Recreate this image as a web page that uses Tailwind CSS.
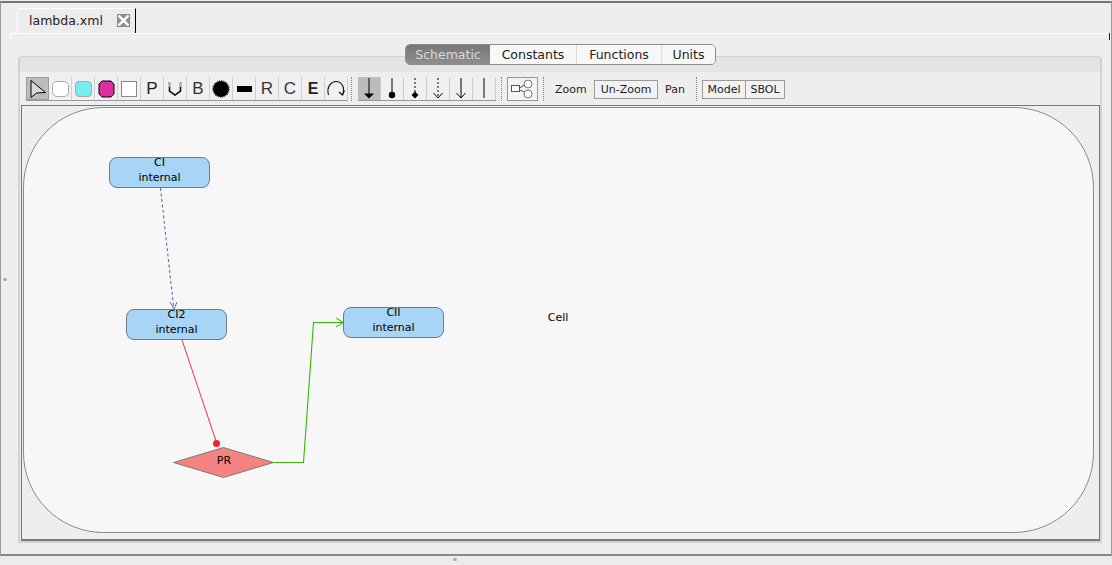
<!DOCTYPE html>
<html lang="en">
<head>
  <meta charset="UTF-8">
  <title>lambda.xml</title>
  <script src="https://cdn.jsdelivr.net/npm/@tailwindcss/browser@4"></script>
</head>
<body class="relative w-[1112px] h-[565px] overflow-hidden bg-[#ececec] font-['DejaVu_Sans',sans-serif] text-black">
  <!-- window frame -->
  <div class="mt-px h-[555px] border-t-2 border-x border-b-2 border-x-[#999] border-t-[#777] border-b-[#8a8a8a] flex flex-col bg-[#eeeeee]">

    <!-- file tab strip -->
    <div class="relative h-[31px] pl-[16px] pt-[5px] shrink-0">
      <div class="relative z-10 w-[119px] h-[25px] bg-[#ececec] border-t border-l border-t-white border-l-white rounded-tl-[4px] border-r border-r-black flex items-center pl-[11px] gap-[14px] text-[12.5px] text-[#222]">
        <span>lambda.xml</span>
        <span class="-mt-[1px] w-[13px] h-[13px] bg-[#8f8f8f] border border-[#8a8a8a] flex items-center justify-center">
          <svg width="11" height="11" viewBox="0 0 11 11"><path d="M0.5 0.5 L10.5 10.5 M10.5 0.5 L0.5 10.5" stroke="#fff" stroke-width="2.4"/></svg>
        </span>
      </div>
      <div class="absolute left-[9px] top-[30px] w-[1098px] h-px bg-white"></div>
      <div class="absolute left-[9px] top-[30px] w-px h-[7px] bg-white"></div>
      <div class="absolute left-[1108px] top-[30px] w-px h-[7px] bg-[#222]"></div>
    </div>

    <!-- panel with segmented tabs -->
    <div class="relative mt-[22px] ml-[17px] w-[1084px] h-[487px] border-x-2 border-b-2 border-t border-[#d2d2d2] rounded-t-[4px] flex flex-col bg-[#eeeeee]">
      <div class="absolute left-[385px] top-[-13px] w-[311px] h-[21px] z-10 flex rounded-[5px] border border-[#8d8d8d] text-[12.5px] text-[#222] overflow-hidden">
        <div class="w-[84px] pt-[2px] flex items-center justify-center bg-gradient-to-b from-[#777] to-[#8e8e8e] text-[#d8d8d8]">Schematic</div>
        <div class="w-[87px] pt-[2px] flex items-center justify-center bg-[#f7f7f7] border-r border-[#dcdcdc]">Constants</div>
        <div class="w-[85px] pt-[2px] flex items-center justify-center bg-[#f7f7f7] border-r border-[#dcdcdc]">Functions</div>
        <div class="flex-1 pt-[2px] flex items-center justify-center bg-[#f7f7f7]">Units</div>
      </div>
      <div class="h-[15px] bg-[#e4e4e4] shrink-0"></div>

      <!-- toolbar -->
      <div class="h-[33px] shrink-0 pl-[6px] pt-[5px] flex items-start text-[11px] text-[#222]">
        <div class="flex h-[24px] border-b border-[#999] font-['Liberation_Sans',sans-serif]">
          <div class="w-[23px] bg-[#bcbcbc] border border-[#999] flex items-center justify-center"><svg width="20" height="20" viewBox="0 0 20 20"><path d="M3 1.5 L3 18.5 L8.5 14 L17.5 13.5 Z" fill="#d8d8d8" stroke="#000" stroke-width="1"/></svg></div>
          <div class="w-[23px] bg-[#f0f0f0] border-r border-[#cfcfcf] flex items-center justify-center"><div class="w-[17px] h-[16px] rounded-[5px] bg-white border border-[#aaa]"></div></div>
          <div class="w-[23px] bg-[#f0f0f0] border-r border-[#cfcfcf] flex items-center justify-center"><div class="w-[17px] h-[16px] rounded-[4px] bg-[#74eeee] border border-[#aaa]"></div></div>
          <div class="w-[23px] bg-[#f0f0f0] border-r border-[#cfcfcf] flex items-center justify-center"><svg width="17" height="18" viewBox="0 0 17 18"><path d="M4 1 H13 L16 4 V14 L13 17 H4 L1 14 V4 Z" fill="#de2ea0" stroke="#000" stroke-width="1"/></svg></div>
          <div class="w-[23px] bg-[#f0f0f0] border-r border-[#cfcfcf] flex items-center justify-center"><div class="w-[16px] h-[16px] bg-white border border-[#888]"></div></div>
          <div class="w-[23px] bg-[#f0f0f0] border-r border-[#cfcfcf] flex items-center justify-center text-[17px]">P</div>
          <div class="w-[23px] bg-[#f0f0f0] border-r border-[#cfcfcf] flex items-center justify-center"><svg width="16" height="17" viewBox="0 0 16 17"><path d="M2.5 2 V11 L8 15 L13.5 11 V2" fill="none" stroke="#000" stroke-width="1.5"/><path d="M2.5 2 V7 M13.5 2 V7" stroke="#bbb" stroke-width="1.6"/></svg></div>
          <div class="w-[23px] bg-[#f0f0f0] border-r border-[#cfcfcf] flex items-center justify-center text-[17px] text-[#333]">B</div>
          <div class="w-[23px] bg-[#f0f0f0] border-r border-[#cfcfcf] flex items-center justify-center"><div class="w-[16px] h-[16px] rounded-full bg-black outline-1 outline-dotted outline-[#555]"></div></div>
          <div class="w-[23px] bg-[#f0f0f0] border-r border-[#cfcfcf] flex items-center justify-center"><div class="w-[15px] h-[6px] bg-black"></div></div>
          <div class="w-[23px] bg-[#f0f0f0] border-r border-[#cfcfcf] flex items-center justify-center text-[17px] text-[#333]">R</div>
          <div class="w-[23px] bg-[#f0f0f0] border-r border-[#cfcfcf] flex items-center justify-center text-[17px] text-[#333]">C</div>
          <div class="w-[23px] bg-[#f0f0f0] border-r border-[#cfcfcf] flex items-center justify-center text-[16px] font-bold">E</div>
          <div class="w-[23px] bg-[#f0f0f0] border-r border-[#cfcfcf] flex items-center justify-center"><svg width="20" height="18" viewBox="0 0 20 18"><path d="M2.5 15 C0 6 6 1.5 10 1.5 C15 1.5 19 6 17 14" fill="none" stroke="#111" stroke-width="1.1"/><path d="M13 12 L16.5 15 L18.5 10.5" fill="none" stroke="#111" stroke-width="1.1"/></svg></div>
        </div>
        <div class="ml-[3px] mr-[6px] h-[24px] border-l border-dotted border-[#888]"></div>
        <div class="flex h-[24px] border-b border-[#999]">
          <div class="w-[23px] bg-[#bcbcbc] border-r border-[#ccc] flex items-center justify-center"><svg width="16" height="22" viewBox="0 0 16 22"><path d="M8 0 V17" stroke="#000"/><path d="M3 15.5 H13 L8 20.5 Z" fill="#000"/></svg></div>
          <div class="w-[23px] bg-[#f0f0f0] border-r border-[#ccc] flex items-center justify-center"><svg width="16" height="22" viewBox="0 0 16 22"><path d="M8 0 V15" stroke="#000"/><circle cx="8" cy="17" r="3.2" fill="#000"/></svg></div>
          <div class="w-[23px] bg-[#f0f0f0] border-r border-[#ccc] flex items-center justify-center"><svg width="16" height="22" viewBox="0 0 16 22"><path d="M8 0 V14" stroke="#000" stroke-dasharray="2 2"/><path d="M8 13.5 L11.5 17 L8 20.5 L4.5 17 Z" fill="#000"/></svg></div>
          <div class="w-[23px] bg-[#f0f0f0] border-r border-[#ccc] flex items-center justify-center"><svg width="16" height="22" viewBox="0 0 16 22"><path d="M8 0 V19" stroke="#000" stroke-dasharray="2 2"/><path d="M3.5 15 L8 20 L12.5 15" fill="none" stroke="#000"/></svg></div>
          <div class="w-[23px] bg-[#f0f0f0] border-r border-[#ccc] flex items-center justify-center"><svg width="16" height="22" viewBox="0 0 16 22"><path d="M8 0 V19.5" stroke="#000"/><path d="M3.5 15 L8 20 L12.5 15" fill="none" stroke="#000"/></svg></div>
          <div class="w-[23px] bg-[#f0f0f0] border-r border-[#ccc] flex items-center justify-center"><svg width="16" height="22" viewBox="0 0 16 22"><path d="M8 0 V20" stroke="#000"/></svg></div>
        </div>
        <div class="ml-[5px] mr-[5px] h-[24px] border-l border-dotted border-[#888]"></div>
        <div class="w-[31px] h-[24px] bg-[#f4f4f4] border border-[#999] flex items-center justify-center">
          <svg width="25" height="20" viewBox="0 0 25 20"><rect x="1.5" y="6.5" width="8" height="6" fill="#fff" stroke="#555"/><circle cx="18" cy="5" r="4" fill="#fff" stroke="#777"/><circle cx="18" cy="15" r="4" fill="#fff" stroke="#777"/><path d="M9.5 9 L14.5 6 M9.5 11 L14.5 13" stroke="#555"/></svg>
        </div>
        <div class="ml-[5px] mr-[11px] h-[24px] border-l border-dotted border-[#888]"></div>
        <div class="h-[26px] flex items-center w-[39px]">Zoom</div>
        <div class="mt-[3px] pt-px w-[64px] h-[19px] border border-[#999] bg-[#f2f2f2] flex items-center justify-center">Un-Zoom</div>
        <div class="h-[26px] flex items-center ml-[7px] w-[31px]">Pan</div>
        <div class="mr-[5px] h-[24px] border-l border-dotted border-[#888]"></div>
        <div class="mt-[3px] flex h-[19px]">
          <div class="pt-px w-[44px] border border-[#999] bg-[#f2f2f2] flex items-center justify-center">Model</div>
          <div class="pt-px w-[39px] border border-l-0 border-[#999] bg-[#f2f2f2] flex items-center justify-center">SBOL</div>
        </div>
      </div>

      <!-- schematic canvas -->
      <div class="relative ml-[1px] w-[1079px] h-[436px] border border-[#777] border-b-2 overflow-hidden text-[11px] leading-[15px] text-center">
        <svg class="absolute left-0 top-0" width="1077" height="434" viewBox="22 106 1077 434">
          <rect x="23.5" y="107.5" width="1070" height="425" rx="80" ry="80" fill="#f7f7f7" stroke="#8a8a8a"/>
          <path d="M160.5 188 L173.5 306" fill="none" stroke="#5a5aa6" stroke-dasharray="3 2.5"/>
          <path d="M170 302 L174 309 L177 302" fill="none" stroke="#6a6ab0"/>
          <path d="M182 340 L216 441" fill="none" stroke="#ff3040"/>
          <circle cx="216.5" cy="443.5" r="3.5" fill="#f5202c"/>
          <path d="M274 462.5 H303.5 L313.5 322.5 H343" fill="none" stroke="#36b800" stroke-width="1.1"/>
          <path d="M336 318 L343.5 322.5 L336 327" fill="none" stroke="#36b800"/>
          <path d="M173.5 462.5 L223.5 447.5 L273.5 462.5 L223.5 477.5 Z" fill="#f58282" stroke="#807a7a"/>
        </svg>
        <div class="absolute left-[87px] top-[51px] w-[101px] h-[31px] rounded-[8px] bg-[#a8d5f5] border border-[#6f7b85]"><div class="-mt-[3px]">CI<br>internal</div></div>
        <div class="absolute left-[104px] top-[203px] w-[101px] h-[31px] rounded-[8px] bg-[#a8d5f5] border border-[#6f7b85]"><div class="-mt-[3px]">CI2<br>internal</div></div>
        <div class="absolute left-[321px] top-[201px] w-[101px] h-[31px] rounded-[8px] bg-[#a8d5f5] border border-[#6f7b85]"><div class="-mt-[3px]">CII<br>internal</div></div>
        <div class="absolute left-[182px] top-[347px] w-[40px]">PR</div>
        <div class="absolute left-[516px] top-[204px] w-[40px]">Cell</div>
      </div>
    </div>
  </div>

  <!-- split pane grips -->
  <div class="absolute left-[3px] top-[278px] w-[4px] h-[3px] rounded-full bg-[#aaa]"></div>
  <div class="absolute left-[453px] top-[558px] w-[4px] h-[3px] rounded-full bg-[#aaa]"></div>
</body>
</html>
